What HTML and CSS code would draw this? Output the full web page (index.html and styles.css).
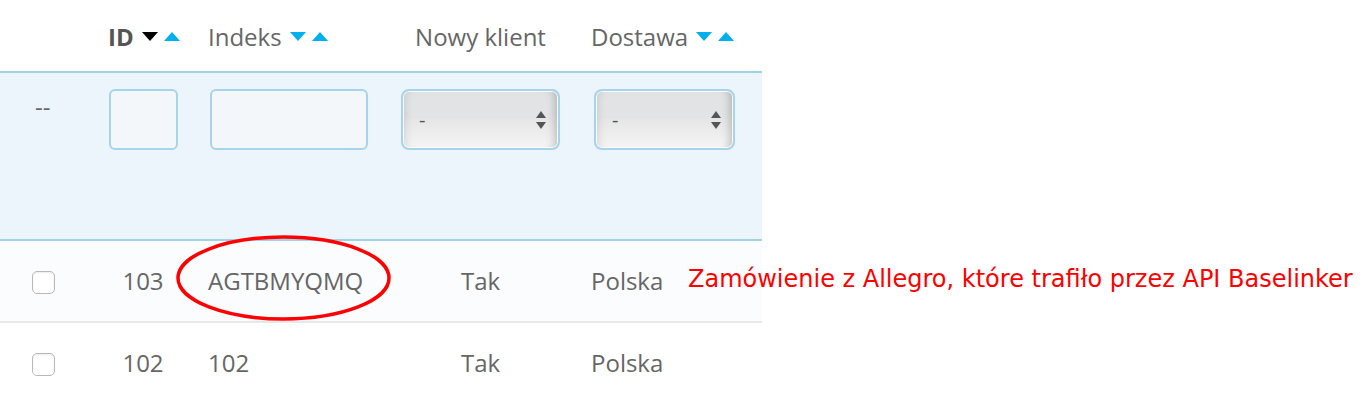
FILE: index.html
```html
<!DOCTYPE html>
<html lang="pl">
<head>
  <meta charset="UTF-8">
  <meta name="viewport" content="width=device-width, initial-scale=1.0">
  <title>Zamówienia</title>
  <link rel="stylesheet" href="styles.css">
</head>
<body>
  <div class="orders">
    <table class="grid">
      <colgroup>
        <col class="c-check">
        <col class="c-id">
        <col class="c-ref">
        <col class="c-new">
        <col class="c-country">
      </colgroup>
      <thead>
        <tr class="head">
          <th></th>
          <th>
            <span class="title strong">ID</span>
            <span class="sort">
              <svg width="16" height="9" viewBox="0 0 16 9"><polygon points="0,0 16,0 8,9" fill="#000"/></svg>
              <svg width="16" height="9" viewBox="0 0 16 9"><polygon points="0,9 16,9 8,0" fill="#00aff0"/></svg>
            </span>
          </th>
          <th>
            <span class="title">Indeks</span>
            <span class="sort">
              <svg width="16" height="9" viewBox="0 0 16 9"><polygon points="0,0 16,0 8,9" fill="#00aff0"/></svg>
              <svg width="16" height="9" viewBox="0 0 16 9"><polygon points="0,9 16,9 8,0" fill="#00aff0"/></svg>
            </span>
          </th>
          <th class="center"><span class="title">Nowy klient</span></th>
          <th>
            <span class="title">Dostawa</span>
            <span class="sort">
              <svg width="16" height="9" viewBox="0 0 16 9"><polygon points="0,0 16,0 8,9" fill="#00aff0"/></svg>
              <svg width="16" height="9" viewBox="0 0 16 9"><polygon points="0,9 16,9 8,0" fill="#00aff0"/></svg>
            </span>
          </th>
        </tr>
        <tr class="filter">
          <th class="dash">--</th>
          <th><input type="text" class="field field-id"></th>
          <th><input type="text" class="field field-ref"></th>
          <th>
            <div class="pick pick-new">
              <select><option>-</option><option>Tak</option><option>Nie</option></select>
              <svg class="arrows" width="10" height="18" viewBox="0 0 10 18">
                <polygon points="0,7 10,7 5,0" fill="#555"/>
                <polygon points="0,11 10,11 5,18" fill="#555"/>
              </svg>
            </div>
          </th>
          <th>
            <div class="pick pick-country">
              <select><option>-</option><option>Polska</option></select>
              <svg class="arrows" width="10" height="18" viewBox="0 0 10 18">
                <polygon points="0,7 10,7 5,0" fill="#555"/>
                <polygon points="0,11 10,11 5,18" fill="#555"/>
              </svg>
            </div>
          </th>
        </tr>
      </thead>
      <tbody>
        <tr class="odd">
          <td><input type="checkbox" class="tick"></td>
          <td class="center">103</td>
          <td>AGTBMYQMQ</td>
          <td class="center">Tak</td>
          <td>Polska</td>
        </tr>
        <tr>
          <td><input type="checkbox" class="tick"></td>
          <td class="center">102</td>
          <td>102</td>
          <td class="center">Tak</td>
          <td>Polska</td>
        </tr>
      </tbody>
    </table>

    <svg class="circle" width="215" height="88" viewBox="0 0 215 88">
      <ellipse cx="107.5" cy="43" rx="105.5" ry="41" fill="none" stroke="#f00" stroke-width="3.5"/>
    </svg>
    <p class="note">Zamówienie z Allegro, które trafiło przez API Baselinker</p>
  </div>
</body>
</html>
```

FILE: styles.css
```css
body {
  margin: 0;
  font-family: "Open Sans", sans-serif;
  background-color: #fff;
}

.orders {
  position: relative;
  width: 1362px;
  height: 400px;
  overflow: hidden;
}

.grid {
  width: 762px;
  border-collapse: separate;
  border-spacing: 0;
  table-layout: fixed;
}

.c-check { width: 100px; }
.c-id { width: 100px; }
.c-ref { width: 193px; }
.c-new { width: 184px; }
.c-country { width: 185px; }

th,
td {
  padding: 0;
  text-align: left;
  font-weight: normal;
  font-size: 24px;
  line-height: 32px;
  color: #666;
  white-space: nowrap;
}

th:nth-child(1), td:nth-child(1) { padding-left: 32px; }
th:nth-child(2), td:nth-child(2) { padding-left: 8px; padding-right: 22px; }
th:nth-child(3), td:nth-child(3) { padding-left: 8px; }
th:nth-child(4), td:nth-child(4) { padding-left: 8px; padding-right: 17px; }
th:nth-child(5), td:nth-child(5) { padding-left: 14px; }

.center {
  text-align: center;
}

/* header row */
.head th {
  padding-top: 21px;
  padding-bottom: 18px;
  border-bottom: 2px solid #a0d2ea;
}

.title.strong {
  font-weight: bold;
  color: #555;
}

.sort {
  display: inline-flex;
  gap: 6px;
  margin-left: 2px;
  vertical-align: 5px;
}

.sort svg {
  display: block;
}

/* filter row */
.filter th {
  background-color: #ecf5fb;
  padding-top: 16px;
  padding-bottom: 89px;
  vertical-align: top;
  border-bottom: 2px solid #a0d2ea;
}

.filter th.dash {
  padding-top: 18px;
  padding-left: 35px;
  color: #666;
}

.field {
  display: block;
  box-sizing: border-box;
  height: 61px;
  margin: 0 0 0 1px;
  border: 2px solid #a5d4ec;
  border-radius: 6px;
  background-color: #f3f7f9;
  outline: none;
}

.field-id { width: 69px; }
.field-ref { width: 158px; margin-left: 2px; }

.pick {
  position: relative;
  height: 61px;
}

.pick-new { width: 159px; }
.pick-country { width: 141px; margin-left: 3px; }

.pick select {
  appearance: none;
  -webkit-appearance: none;
  display: block;
  box-sizing: border-box;
  width: 100%;
  height: 100%;
  padding: 0 0 0 16px;
  border: 2px solid #a5d4ec;
  border-radius: 8px;
  font-family: "Open Sans", sans-serif;
  font-size: 20px;
  color: #555;
  background: linear-gradient(#e1e2e4, #e3e4e6 48%, #e6e6e7 50%, #f4f4f4);
  box-shadow: inset 0 0 0 1px #fafafa, inset 10px 0 8px -8px rgba(0, 0, 0, 0.12), inset -10px 0 8px -7px rgba(0, 0, 0, 0.22);
  outline: none;
}

.pick .arrows {
  position: absolute;
  right: 14px;
  top: 22px;
}

/* body rows */
tbody td {
  padding-top: 24px;
  padding-bottom: 24px;
  vertical-align: middle;
  border-bottom: 2px solid #e5e9ec;
}

tbody tr.odd td {
  background-color: #fbfcfe;
}

.tick {
  appearance: none;
  -webkit-appearance: none;
  display: block;
  width: 23px;
  height: 23px;
  margin: 3px 0 0 0;
  border: 1px solid #b9b9b9;
  border-radius: 5px;
  background-color: #fff;
  box-shadow: inset 0 1px 2px rgba(0, 0, 0, 0.08);
}

/* annotation drawn over the screenshot */
.circle {
  position: absolute;
  left: 176px;
  top: 235px;
}

.note {
  position: absolute;
  left: 688px;
  top: 265px;
  margin: 0;
  font-family: "DejaVu Sans", sans-serif;
  font-size: 24px;
  line-height: 28px;
  color: #f00;
  white-space: nowrap;
}
```
